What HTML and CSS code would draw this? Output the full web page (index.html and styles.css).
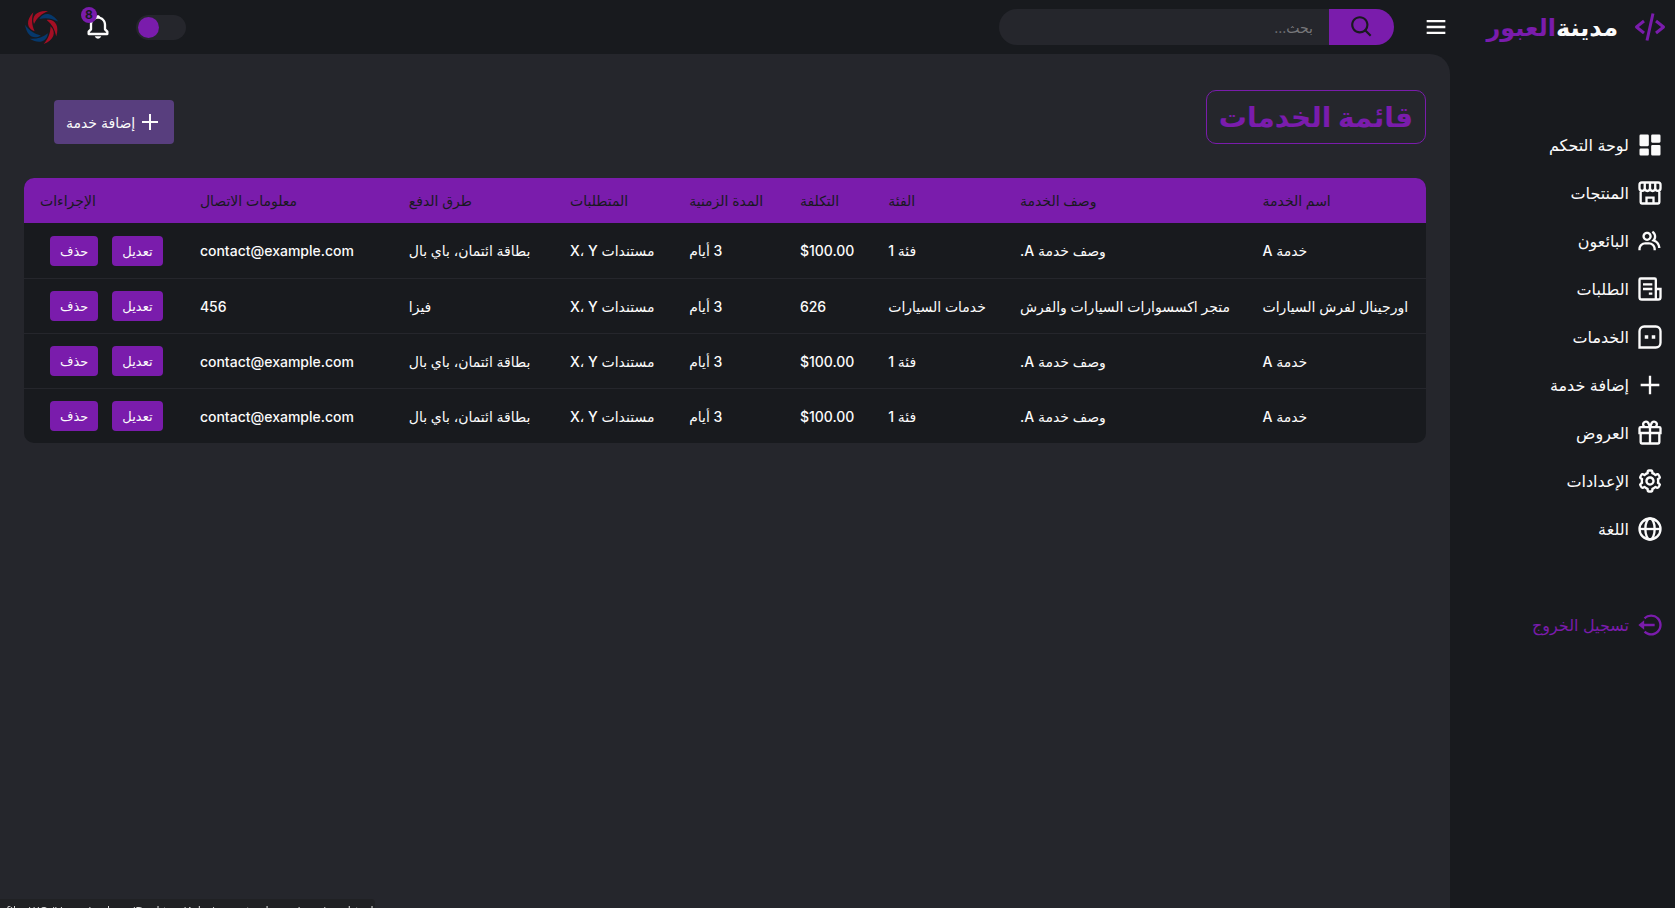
FILE: index.html
```html
<!DOCTYPE html>
<html lang="ar" dir="rtl">
<head>
<meta charset="utf-8">
<title>قائمة الخدمات</title>
<link rel="stylesheet" href="styles.css">
</head>
<body>
<div class="layout">
  <aside class="sidebar">
    <a class="logo" href="#">
      <svg class="logo-icon" viewBox="0 0 24 24"><path d="m7.375 16.781 1.25-1.562L4.601 12l4.024-3.219-1.25-1.562-5 4a1 1 0 0 0 0 1.562l5 4zm9.25-9.562-1.25 1.562L19.399 12l-4.024 3.219 1.25 1.562 5-4a1 1 0 0 0 0-1.562l-5-4zm-1.649-4.003-4 18-1.953-.434 4-18z"/></svg>
      <span class="logo-name">مدينة<span class="accent">العبور</span></span>
    </a>
    <nav class="menu">
      <a class="menu-item" href="#"><svg class="icon" viewBox="0 0 24 24"><path d="M4 13h6a1 1 0 0 0 1-1V4a1 1 0 0 0-1-1H4a1 1 0 0 0-1 1v8a1 1 0 0 0 1 1zm-1 7a1 1 0 0 0 1 1h6a1 1 0 0 0 1-1v-4a1 1 0 0 0-1-1H4a1 1 0 0 0-1 1v4zm10 0a1 1 0 0 0 1 1h6a1 1 0 0 0 1-1v-7a1 1 0 0 0-1-1h-6a1 1 0 0 0-1 1v7zm1-10h6a1 1 0 0 0 1-1V4a1 1 0 0 0-1-1h-6a1 1 0 0 0-1 1v5a1 1 0 0 0 1 1z"/></svg><span>لوحة التحكم</span></a>
      <a class="menu-item" href="#"><svg class="icon line" viewBox="0 0 24 24"><path d="M5 3h14a2 2 0 0 1 2 2v3a2.2 2.2 0 0 1-4.5 0V4M7.500 4v4A2.200 2.200 0 0 1 3 8V5a2 2 0 0 1 2-2M7.500 8a2.200 2.200 0 0 0 4.500 0 2.200 2.200 0 0 0 4.500 0M12 8V3M4 11v9a1 1 0 0 0 1 1h14a1 1 0 0 0 1-1v-9M9 21v-5h6v5"/></svg><span>المنتجات</span></a>
      <a class="menu-item" href="#"><svg class="icon" viewBox="0 0 24 24"><path d="M16.604 11.048a5.67 5.67 0 0 0 .751-3.44c-.179-1.784-1.175-3.361-2.803-4.44l-1.105 1.666c1.119.742 1.800 1.799 1.918 2.974a3.693 3.693 0 0 1-1.072 2.986l-1.192 1.192 1.618.475C18.951 13.701 19 17.957 19 18h2c0-1.789-.956-5.285-4.396-6.952zM9.500 12c2.206 0 4-1.794 4-4s-1.794-4-4-4-4 1.794-4 4 1.794 4 4 4zm0-6c1.103 0 2 .897 2 2s-.897 2-2 2-2-.897-2-2 .897-2 2-2zm1.500 7H8c-3.309 0-6 2.691-6 6v1h2v-1c0-2.206 1.794-4 4-4h3c2.206 0 4 1.794 4 4v1h2v-1c0-3.309-2.691-6-6-6z"/></svg><span>البائعون</span></a>
      <a class="menu-item" href="#"><svg class="icon line" viewBox="0 0 24 24"><path d="M17 20V4a1 1 0 0 0-1-1H4a1 1 0 0 0-1 1v15a2 2 0 0 0 2 2h14a2 2 0 0 0 2-2v-7h-4M6 8h8M6 12h8M11 16h3"/></svg><span>الطلبات</span></a>
      <a class="menu-item" href="#"><svg class="icon line" viewBox="0 0 24 24"><path d="M7 3h10a4 4 0 0 1 4 4v10a4 4 0 0 1-4 4H3V7a4 4 0 0 1 4-4z"/><path class="solid" d="M7.500 10.500h3v3h-3zM13.500 10.500h3v3h-3z"/></svg><span>الخدمات</span></a>
      <a class="menu-item" href="#"><svg class="icon" viewBox="0 0 24 24"><path d="M19 11h-6V4h-2v7H4v2h7v7h2v-7h7v-2z"/></svg><span>إضافة خدمة</span></a>
      <a class="menu-item" href="#"><svg class="icon line" viewBox="0 0 24 24"><path d="M4 7h16a1 1 0 0 1 1 1v4H3V8a1 1 0 0 1 1-1zM4 12v8a1 1 0 0 0 1 1h14a1 1 0 0 0 1-1v-8M12 7v14M12 7H8a2.400 2.400 0 1 1 2.600-3.500L12 7l1.400-3.500A2.400 2.400 0 1 1 16 7z"/></svg><span>العروض</span></a>
      <a class="menu-item" href="#"><svg class="icon" viewBox="0 0 24 24"><path d="M12 16c2.206 0 4-1.794 4-4s-1.794-4-4-4-4 1.794-4 4 1.794 4 4 4zm0-6c1.084 0 2 .916 2 2s-.916 2-2 2-2-.916-2-2 .916-2 2-2z"/><path d="m2.845 16.136 1 1.730c.531.917 1.809 1.261 2.730.730l.529-.306A8.100 8.100 0 0 0 9 19.402V20c0 1.103.897 2 2 2h2c1.103 0 2-.897 2-2v-.598a8.132 8.132 0 0 0 1.896-1.111l.529.306c.923.530 2.198.188 2.731-.731l.999-1.729a2.001 2.001 0 0 0-.731-2.732l-.505-.292a7.718 7.718 0 0 0 0-2.224l.505-.292a2.002 2.002 0 0 0 .731-2.732l-.999-1.729c-.531-.920-1.808-1.265-2.731-.732l-.529.306A8.100 8.100 0 0 0 15 4.598V4c0-1.103-.897-2-2-2h-2c-1.103 0-2 .897-2 2v.598a8.132 8.132 0 0 0-1.896 1.111l-.529-.306c-.924-.531-2.200-.187-2.731.732l-.999 1.729a2.001 2.001 0 0 0 .731 2.732l.505.292a7.683 7.683 0 0 0 0 2.223l-.505.292a2.003 2.003 0 0 0-.731 2.733zm3.326-2.758A5.703 5.703 0 0 1 6 12c0-.462.058-.926.170-1.378a.999.999 0 0 0-.470-1.108l-1.123-.650.998-1.729 1.145.662a.997.997 0 0 0 1.188-.142 6.071 6.071 0 0 1 2.384-1.399A1 1 0 0 0 11 5.300V4h2v1.300a1 1 0 0 0 .708.956 6.083 6.083 0 0 1 2.384 1.399.999.999 0 0 0 1.188.142l1.144-.661 1 1.729-1.124.649a1 1 0 0 0-.470 1.108c.112.452.170.916.170 1.378 0 .461-.058.925-.171 1.378a1 1 0 0 0 .471 1.108l1.123.649-.998 1.729-1.145-.661a.996.996 0 0 0-1.188.142 6.071 6.071 0 0 1-2.384 1.399A1 1 0 0 0 13 18.700l.002 1.300H11v-1.300a1 1 0 0 0-.708-.956 6.083 6.083 0 0 1-2.384-1.399.992.992 0 0 0-1.188-.141l-1.144.662-1-1.729 1.124-.651a1 1 0 0 0 .471-1.108z"/></svg><span>الإعدادات</span></a>
      <a class="menu-item" href="#"><svg class="icon line" viewBox="0 0 24 24"><circle cx="12" cy="12" r="9"/><ellipse cx="12" cy="12" rx="4" ry="9"/><path d="M3 12h18"/></svg><span>اللغة</span></a>
    </nav>
    <a class="menu-item logout" href="#"><svg class="icon" viewBox="0 0 24 24"><path d="m2 12 5 4v-3h9v-2H7V8z"/><path d="M13.001 2.999a8.938 8.938 0 0 0-6.364 2.637L8.051 7.050c1.322-1.322 3.080-2.051 4.950-2.051s3.628.729 4.950 2.051 2.051 3.080 2.051 4.950-.729 3.628-2.051 4.950-3.080 2.051-4.950 2.051-3.628-.729-4.950-2.051l-1.414 1.414c1.699 1.700 3.959 2.637 6.364 2.637s4.665-.937 6.364-2.637c1.700-1.699 2.637-3.959 2.637-6.364s-.937-4.665-2.637-6.364a8.938 8.938 0 0 0-6.364-2.637z"/></svg><span>تسجيل الخروج</span></a>
  </aside>

  <div class="content">
    <header class="topbar">
      <button class="icon-button" type="button" aria-label="القائمة"><svg class="icon" viewBox="0 0 24 24"><path d="M4 6h16v2H4zM4 11h16v2H4zM4 16h16v2H4z"/></svg></button>
      <form class="search" role="search">
        <button class="search-button" type="button" aria-label="بحث"><svg class="search-icon" viewBox="0 0 24 24"><path d="M10 18a7.952 7.952 0 0 0 4.897-1.688l4.396 4.396 1.414-1.414-4.396-4.396A7.952 7.952 0 0 0 18 10c0-4.411-3.589-8-8-8s-8 3.589-8 8 3.589 8 8 8zm0-14c3.309 0 6 2.691 6 6s-2.691 6-6 6-6-2.691-6-6 2.691-6 6-6z"/></svg></button>
        <input class="search-input" type="search" placeholder="بحث..." aria-label="بحث">
      </form>
      <input class="toggle" type="checkbox" aria-label="الوضع الداكن">
      <a class="bell" href="#" aria-label="الإشعارات"><svg class="icon" viewBox="0 0 24 24"><path d="M19 13.586V10c0-3.217-2.185-5.927-5.145-6.742C13.562 2.520 12.846 2 12 2s-1.562.520-1.855 1.258C7.185 4.074 5 6.783 5 10v3.586l-1.707 1.707A.996.996 0 0 0 3 16v2a1 1 0 0 0 1 1h16a1 1 0 0 0 1-1v-2a.996.996 0 0 0-.293-.707L19 13.586zM19 17H5v-.586l1.707-1.707A.996.996 0 0 0 7 14v-4c0-2.757 2.243-5 5-5s5 2.243 5 5v4c0 .266.105.520.293.707L19 16.414V17zm-7 5a2.980 2.980 0 0 0 2.818-2H9.182A2.980 2.980 0 0 0 12 22z"/></svg><span class="badge">8</span></a>
      <a class="profile" href="#" aria-label="الحساب">
        <svg class="profile-mark" viewBox="-18 -18 36 36">
          <defs><path id="blade" d="M-9-3Q-12-12 2-17Q-4-18-9-15Q-15-11-9-3z"/></defs>
          <g class="red"><path d="M-8-3C-11-11-5-17 6-16C-1-13-5-9-8-3z"/><path transform="rotate(-51)" d="M-8-3C-11-11-5-17 6-16C-1-13-5-9-8-3z"/><path transform="rotate(103)" d="M-8-3C-11-11-5-17 6-16C-1-13-5-9-8-3z"/><path transform="rotate(154)" d="M-8-3C-11-11-5-17 6-16C-1-13-5-9-8-3z"/></g>
          <g class="blue"><path transform="rotate(51)" d="M-8-3C-11-11-5-17 6-16C-1-13-5-9-8-3z"/><path transform="rotate(206)" d="M-8-3C-11-11-5-17 6-16C-1-13-5-9-8-3z"/><path transform="rotate(257)" d="M-8-3C-11-11-5-17 6-16C-1-13-5-9-8-3z"/></g>
        </svg>
      </a>
    </header>

    <main class="page">
      <div class="page-head">
        <h1 class="title">قائمة الخدمات</h1>
        <button class="add-button" type="button"><svg class="icon" viewBox="0 0 24 24"><path d="M20 11h-7V4h-2v7H4v2h7v7h2v-7h7z"/></svg><span>إضافة خدمة</span></button>
      </div>
      <table class="services">
        <colgroup><col class="c-name"><col class="c-desc"><col class="c-cat"><col class="c-cost"><col class="c-time"><col class="c-req"><col class="c-pay"><col class="c-contact"><col class="c-actions"></colgroup>
        <thead>
          <tr><th>اسم الخدمة</th><th>وصف الخدمة</th><th>الفئة</th><th>التكلفة</th><th>المدة الزمنية</th><th>المتطلبات</th><th>طرق الدفع</th><th>معلومات الاتصال</th><th>الإجراءات</th></tr>
        </thead>
        <tbody>
          <tr><td>خدمة A</td><td>وصف خدمة A.</td><td>فئة 1</td><td>$100.00</td><td>3 أيام</td><td>مستندات X، Y</td><td>بطاقة ائتمان، باي بال</td><td>contact@example.com</td><td><div class="actions"><button class="action" type="button">تعديل</button><button class="action" type="button">حذف</button></div></td></tr>
          <tr><td>اورجينال لفرش السيارات</td><td>متجر اكسسوارات السيارات والفرش</td><td>خدمات السيارات</td><td>626</td><td>3 أيام</td><td>مستندات X، Y</td><td>فيزا</td><td>456</td><td><div class="actions"><button class="action" type="button">تعديل</button><button class="action" type="button">حذف</button></div></td></tr>
          <tr><td>خدمة A</td><td>وصف خدمة A.</td><td>فئة 1</td><td>$100.00</td><td>3 أيام</td><td>مستندات X، Y</td><td>بطاقة ائتمان، باي بال</td><td>contact@example.com</td><td><div class="actions"><button class="action" type="button">تعديل</button><button class="action" type="button">حذف</button></div></td></tr>
          <tr><td>خدمة A</td><td>وصف خدمة A.</td><td>فئة 1</td><td>$100.00</td><td>3 أيام</td><td>مستندات X، Y</td><td>بطاقة ائتمان، باي بال</td><td>contact@example.com</td><td><div class="actions"><button class="action" type="button">تعديل</button><button class="action" type="button">حذف</button></div></td></tr>
        </tbody>
      </table>
    </main>
  </div>
</div>
<div class="status" dir="ltr">file:///C:/Users/wolane/Desktop/Admin-ecoto-dason/services.html#</div>
</body>
</html>
```
FILE: styles.css
```css
:root {
  --dark: #181a1e;
  --grey: #25262c;
  --primary: #7a1cac;
  --text: #fbfbfb;
}

* { box-sizing: border-box; }

body {
  margin: 0;
  background: var(--dark);
  color: var(--text);
  font-family: Inter, "DejaVu Sans", sans-serif;
  font-size: 15px;
  overflow: hidden;
}

a { color: inherit; text-decoration: none; }
button, input { font-family: inherit; color: inherit; border: 0; margin: 0; }
button { cursor: pointer; }
svg { display: block; fill: currentColor; flex: none; }

.icon { width: 28px; height: 28px; }
.line { fill: none; stroke: currentColor; stroke-width: 2; }
.solid { fill: currentColor; stroke: none; }

.layout { display: flex; min-height: 100vh; }

.sidebar { width: 225px; flex: none; }
.logo {
  display: flex;
  align-items: center;
  gap: 14px;
  height: 54px;
  padding-right: 7px;
  font-size: 24px;
  font-weight: 700;
}
.logo-icon { width: 36px; height: 36px; color: var(--primary); }
.accent { color: var(--primary); }

.menu { margin-top: 67px; }
.menu-item {
  display: flex;
  align-items: center;
  gap: 7px;
  height: 48px;
  padding-right: 11px;
  font-size: 16px;
}
.logout { margin-top: 48px; color: var(--primary); }

.content { flex: 1; min-width: 0; display: flex; flex-direction: column; }

.topbar {
  display: flex;
  align-items: center;
  height: 54px;
  padding-left: 24px;
}
.icon-button { background: none; padding: 0; }
.search { display: flex; width: 395px; height: 36px; margin: 0 28px 0 auto; }
.search-button {
  display: flex;
  align-items: center;
  justify-content: center;
  width: 65px;
  padding: 0;
  color: var(--dark);
  background: var(--primary);
  border-radius: 0 18px 18px 0;
}
.search-icon { width: 26px; height: 26px; }
.search-input {
  flex: 1;
  min-width: 0;
  padding: 0 16px;
  font-size: 14px;
  background: var(--grey);
  border-radius: 18px 0 0 18px;
  outline: 0;
}
.search-input::placeholder { color: #77777a; }

.toggle {
  appearance: none;
  width: 50px;
  height: 25px;
  padding: 2px;
  background: var(--grey);
  border-radius: 13px;
}
.toggle::before {
  content: "";
  display: block;
  width: 21px;
  height: 21px;
  margin-right: auto;
  background: var(--primary);
  border-radius: 50%;
}
.bell { position: relative; margin: 0 24px; }
.badge {
  position: absolute;
  top: -6px;
  left: -3px;
  width: 16px;
  height: 16px;
  line-height: 16px;
  border-radius: 50%;
  background: var(--primary);
  color: var(--dark);
  font-size: 12px;
  font-weight: 700;
  text-align: center;
}
.profile-mark { width: 36px; height: 36px; }
.red { fill: #a50f24; }
.blue { fill: #06386b; }

.page {
  flex: 1;
  padding: 36px 24px;
  background: var(--grey);
  border-radius: 0 20px 0 0;
}
.page-head { display: flex; align-items: center; justify-content: space-between; }
.title {
  margin: 0;
  padding: 0 12px;
  border: 1px solid var(--primary);
  border-radius: 10px;
  color: var(--primary);
  font-size: 28px;
  font-weight: 700;
  line-height: 52px;
}
.add-button {
  display: flex;
  align-items: center;
  gap: 3px;
  height: 44px;
  margin: 10px 0 0 30px;
  padding: 0 12px;
  border-radius: 4px;
  background: #583e7e;
  font-size: 14px;
}
.add-button .icon { width: 24px; height: 24px; }

.services {
  width: 100%;
  margin-top: 34px;
  table-layout: fixed;
  border-spacing: 0;
  border-radius: 10px;
  overflow: hidden;
  background: var(--dark);
  font-size: 14px;
}
.services th, .services td { padding: 0 16px; text-align: left; white-space: nowrap; }
.services th { height: 45px; background: var(--primary); color: var(--dark); font-weight: 500; }
.services td { height: 55px; font-weight: 500; }
.services tbody tr + tr td { border-top: 1px solid var(--grey); }
.c-name { width: 12.8%; }
.c-desc { width: 17.3%; }
.c-cat { width: 9.4%; }
.c-cost { width: 6.3%; }
.c-time { width: 7.9%; }
.c-req { width: 8.5%; }
.c-pay { width: 11.5%; }
.c-contact { width: 14.9%; }
.c-actions { width: 11.4%; }
.actions { display: flex; justify-content: flex-end; gap: 14px; padding-left: 10px; }
.action {
  height: 30px;
  padding: 0 10px;
  border-radius: 4px;
  background: var(--primary);
  font-size: 13px;
}

.status {
  position: fixed;
  left: 0;
  bottom: -14px;
  height: 23px;
  width: 375px;
  padding: 5px 6px 0;
  overflow: hidden;
  white-space: nowrap;
  border-radius: 0 4px 0 0;
  background: #202124;
  color: #dddddd;
  font: 12px/16px "Open Sans", sans-serif;
}
```
